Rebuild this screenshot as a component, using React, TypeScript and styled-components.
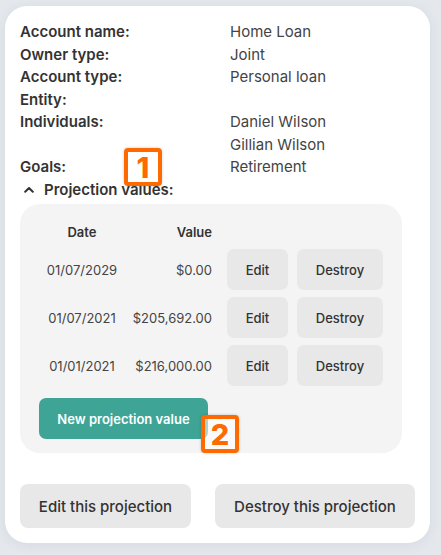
import { createGlobalStyle } from "styled-components";
import styled from "styled-components";

const GlobalStyle = createGlobalStyle`
    body {
        margin: 0;
        background-color: #e4e8ed;
        font-family: Inter, "Noto Sans", sans-serif;
        -webkit-font-smoothing: antialiased;
    }
`;

const Page = styled.div`
    padding: 6px 11px 12px 5px;
`;

const Card = styled.div`
    position: relative;
    background-color: #ffffff;
    border-radius: 22px;
    box-shadow: 0px 2px 12px rgba(40, 60, 90, 0.08);
    padding: 15px 15px 15px 15px;
    height: 537px;
    box-sizing: border-box;
`;

const InfoGrid = styled.div`
    display: grid;
    grid-template-columns: 210px 1fr;
    font-size: 15px;
    line-height: 22.5px;
`;

const Label = styled.div`
    color: #333333;
    font-weight: 600;
`;

const Value = styled.div`
    color: #444444;
`;

const ToggleRow = styled.div`
    display: flex;
    align-items: center;
    gap: 10px;
    padding-left: 4px;
    font-size: 15px;
    line-height: 22.5px;
    font-weight: 600;
    color: #333333;
`;

const Panel = styled.div`
    margin-top: 3px;
    width: 382px;
    box-sizing: border-box;
    background-color: #f4f4f4;
    border-radius: 20px;
    padding: 18px 19px 14px 19px;
`;

const Table = styled.div`
    display: grid;
    grid-template-columns: 86px 102px 70px 86px;
    grid-auto-rows: 41px;
    grid-template-rows: 20px;
    row-gap: 7px;
    align-items: center;
    font-size: 13px;
    color: #444444;
`;

const HeadCell = styled.div<{ $align: "center" | "right" }>`
    font-weight: 600;
    color: #333333;
    text-align: ${(p) => p.$align};
    padding-right: ${(p) => (p.$align === "right" ? "15px" : "0")};
`;

const Cell = styled.div<{ $align: "center" | "right" }>`
    text-align: ${(p) => p.$align};
    padding-right: ${(p) => (p.$align === "right" ? "15px" : "0")};
`;

const GreyButton = styled.button<{ $width: number }>`
    width: ${(p) => p.$width}px;
    height: 41px;
    border: none;
    border-radius: 7px;
    background-color: #e8e8e8;
    color: #333333;
    font-family: Inter, "Noto Sans", sans-serif;
    font-size: 13px;
    font-weight: 500;
    padding: 0;
    cursor: pointer;
`;

const PrimaryButton = styled.button`
    margin-top: 12px;
    height: 41px;
    width: 169px;
    border: none;
    border-radius: 7px;
    background-color: #3ea596;
    color: #ffffff;
    font-family: Inter, "Noto Sans", sans-serif;
    font-size: 13px;
    font-weight: 600;
    cursor: pointer;
`;

const Footer = styled.div`
    display: flex;
    justify-content: space-between;
    margin-top: 31px;
`;

const FooterButton = styled.button<{ $width: number }>`
    width: ${(p) => p.$width}px;
    height: 44px;
    border: none;
    border-radius: 8px;
    background-color: #e8e8e8;
    color: #333333;
    font-family: Inter, "Noto Sans", sans-serif;
    font-size: 15px;
    font-weight: 500;
    cursor: pointer;
`;

const Badge = styled.div<{ $left: number; $top: number }>`
    position: absolute;
    left: ${(p) => p.$left}px;
    top: ${(p) => p.$top}px;
    width: 38px;
    height: 38px;
    box-sizing: border-box;
    border: 4px solid #ff6a00;
    border-radius: 4px;
    background-color: rgba(255, 255, 255, 0.55);
    box-shadow: 0px 0px 3px rgba(0, 0, 0, 0.2);
    display: flex;
    justify-content: center;
    align-items: center;
    color: #ff6a00;
    font-family: Inter, sans-serif;
    font-weight: 800;
    font-size: 29px;
    line-height: 1;
`;

const rows = [
    { date: "01/07/2029", value: "$0.00" },
    { date: "01/07/2021", value: "$205,692.00" },
    { date: "01/01/2021", value: "$216,000.00" },
];

function App() {
    return (
        <>
            <GlobalStyle />
            <Page>
                <Card>
                    <InfoGrid>
                        <Label>Account name:</Label>
                        <Value>Home Loan</Value>
                        <Label>Owner type:</Label>
                        <Value>Joint</Value>
                        <Label>Account type:</Label>
                        <Value>Personal loan</Value>
                        <Label>Entity:</Label>
                        <Value></Value>
                        <Label>Individuals:</Label>
                        <Value>Daniel Wilson</Value>
                        <Label></Label>
                        <Value>Gillian Wilson</Value>
                        <Label>Goals:</Label>
                        <Value>Retirement</Value>
                    </InfoGrid>
                    <ToggleRow>
                        <svg width="10" height="7" viewBox="0 0 10 7">
                            <polyline points="1.2,5.8 5,2 8.8,5.8" fill="none" stroke="#333" strokeWidth="2" strokeLinecap="round" strokeLinejoin="round" />
                        </svg>
                        Projection values:
                    </ToggleRow>
                    <Panel>
                        <Table>
                            <HeadCell $align="center">Date</HeadCell>
                            <HeadCell $align="right">Value</HeadCell>
                            <div />
                            <div />
                            {rows.map((row) => (
                                <>
                                    <Cell $align="center">{row.date}</Cell>
                                    <Cell $align="right">{row.value}</Cell>
                                    <GreyButton $width={61}>Edit</GreyButton>
                                    <GreyButton $width={86}>Destroy</GreyButton>
                                </>
                            ))}
                        </Table>
                        <PrimaryButton>New projection value</PrimaryButton>
                    </Panel>
                    <Footer>
                        <FooterButton $width={171}>Edit this projection</FooterButton>
                        <FooterButton $width={200}>Destroy this projection</FooterButton>
                    </Footer>
                    <Badge $left={119} $top={142}>1</Badge>
                    <Badge $left={196} $top={409}>2</Badge>
                </Card>
            </Page>
        </>
    );
}

export default App;
